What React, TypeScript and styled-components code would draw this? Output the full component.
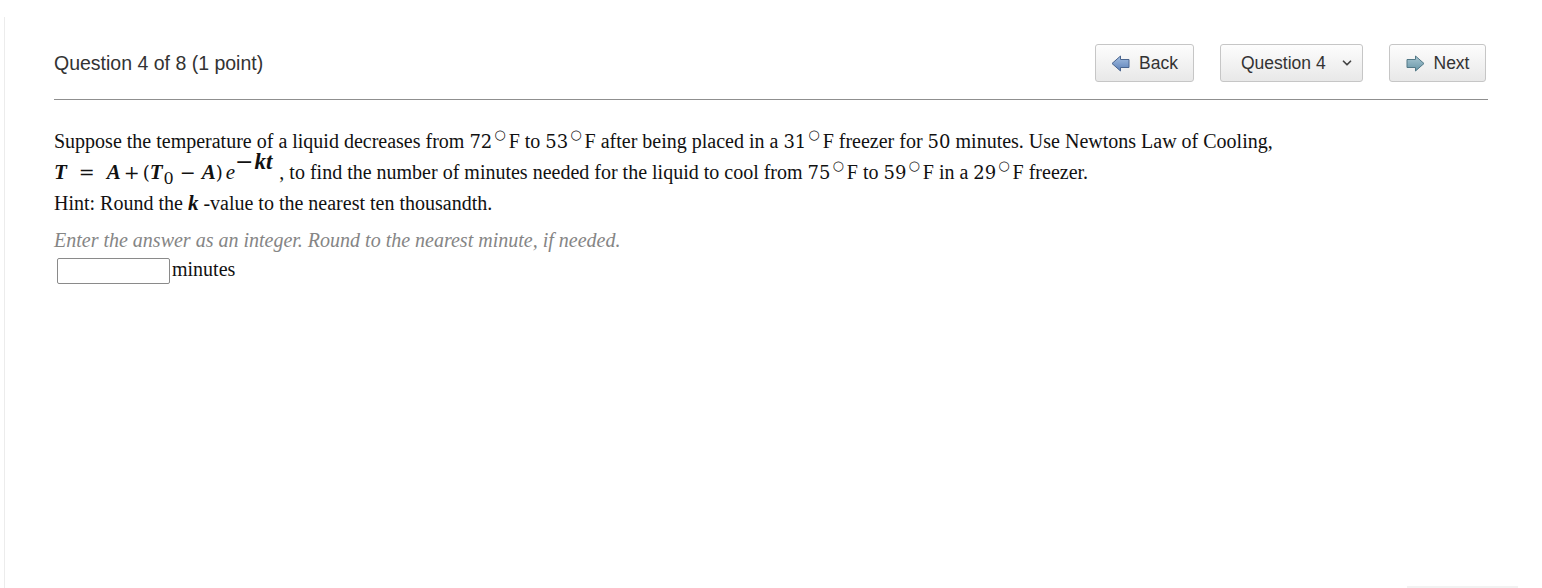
import React, { useState } from 'react';
import styled, { createGlobalStyle } from 'styled-components';
import { ChevronDown } from 'lucide-react';

const GlobalStyle = createGlobalStyle`
  html, body {
    margin: 0;
    padding: 0;
    background: #fff;
  }
  body {
    font-family: "Liberation Sans", Arial, sans-serif;
    color: #333;
  }
`;

const Page = styled.div`
  margin: 17px 0 0 4px;
  min-height: calc(100vh - 17px);
  border-left: 1px solid #ececec;
  box-sizing: border-box;
  padding: 0 54px 0 49px;
`;

const Header = styled.div`
  display: flex;
  align-items: center;
  justify-content: space-between;
  padding: 27px 2px 17px 0;
  border-bottom: 1px solid #8f8f8f;
`;

const Title = styled.h1`
  margin: 0;
  font-family: "Liberation Sans", Arial, sans-serif;
  font-weight: normal;
  font-size: 19.5px;
  color: #333;
`;

const Nav = styled.div`
  display: flex;
  align-items: center;
  gap: 26px;
`;

const NavButton = styled.button<{ $w: number }>`
  display: flex;
  align-items: center;
  justify-content: center;
  gap: 9px;
  width: ${(p) => p.$w}px;
  height: 38px;
  box-sizing: border-box;
  padding: 0 12px;
  border: 1px solid #c6c6c6;
  border-radius: 3px;
  background: linear-gradient(#fdfdfd, #e8e8e8);
  font-family: "Liberation Sans", Arial, sans-serif;
  font-size: 17.5px;
  color: #333;
  cursor: pointer;
`;

const Picker = styled.div`
  display: flex;
  align-items: center;
  justify-content: space-between;
  width: 143px;
  height: 38px;
  box-sizing: border-box;
  padding: 0 8px 0 20px;
  border: 1px solid #c6c6c6;
  border-radius: 3px;
  background: linear-gradient(#fdfdfd, #e8e8e8);
  font-size: 17.5px;
  color: #333;
`;

const Body = styled.div`
  padding-top: 26px;
  font-family: "Liberation Serif", "Times New Roman", serif;
  font-size: 20px;
  color: #111;
`;

const Line = styled.div`
  line-height: 31px;
  white-space: nowrap;
`;

const Num = styled.span`
  font-family: "DejaVu Serif", "Liberation Serif", serif;
  font-size: 18px;
`;

const Var = styled.span<{ $plain?: boolean }>`
  font-family: "Liberation Serif", serif;
  font-style: italic;
  font-weight: ${(p) => (p.$plain ? 'normal' : 'bold')};
  font-size: 21px;
`;

const Op = styled.span<{ $space?: number; $size?: number }>`
  font-family: "DejaVu Serif", serif;
  font-size: ${(p) => p.$size ?? 19}px;
  margin: 0 ${(p) => p.$space ?? 5}px;
`;

const Deg = styled.sup`
  font-family: "DejaVu Sans", sans-serif;
  font-size: 13px;
  vertical-align: 9px;
  line-height: 0;
  margin: 0 3px 0 2px;
`;

const Exp = styled.sup`
  vertical-align: 10px;
  line-height: 0;
  margin: 0 7px 0 0;
`;

const ExpVar = styled.span`
  font-family: "Liberation Serif", serif;
  font-style: italic;
  font-weight: bold;
  font-size: 23px;
  margin-left: 1px;
`;

const Sub = styled.sub`
  font-family: "DejaVu Serif", serif;
  font-size: 16px;
  vertical-align: -5px;
  line-height: 0;
  margin-left: 1px;
`;

const Instruction = styled.div`
  margin-top: 6px;
  font-style: italic;
  color: #858585;
  line-height: 30px;
`;

const AnswerRow = styled.div`
  display: flex;
  align-items: center;
  margin: 3px 0 0 3px;
`;

const AnswerInput = styled.input`
  width: 113px;
  height: 26px;
  box-sizing: border-box;
  border: 1px solid #8a8a8a;
  border-radius: 2px;
  padding: 2px 4px;
  font-family: "Liberation Serif", serif;
  font-size: 16px;
  outline: none;
`;

const Unit = styled.span`
  margin-left: 2px;
  margin-top: -3px;
`;

const Corner = styled.div`
  position: fixed;
  right: 24px;
  bottom: 0;
  width: 111px;
  height: 2px;
  background: #f2f2f2;
`;

const BackArrow = () => (
  <svg width="19" height="17" viewBox="0 0 19 17">
    <defs>
      <linearGradient id="bk" x1="0" y1="0" x2="0" y2="1">
        <stop offset="0" stopColor="#a6c0e2" />
        <stop offset="1" stopColor="#5b80b8" />
      </linearGradient>
    </defs>
    <path d="M1 8.5 L9.5 1 L9.5 4.5 L18 4.5 L18 12.5 L9.5 12.5 L9.5 16 Z" fill="url(#bk)" stroke="#4a658f" strokeWidth="1" strokeLinejoin="round" />
  </svg>
);

const NextArrow = () => (
  <svg width="19" height="17" viewBox="0 0 19 17">
    <defs>
      <linearGradient id="nx" x1="0" y1="0" x2="0" y2="1">
        <stop offset="0" stopColor="#aac8d3" />
        <stop offset="1" stopColor="#6795a7" />
      </linearGradient>
    </defs>
    <path d="M18 8.5 L9.5 1 L9.5 4.5 L1 4.5 L1 12.5 L9.5 12.5 L9.5 16 Z" fill="url(#nx)" stroke="#527886" strokeWidth="1" strokeLinejoin="round" />
  </svg>
);

const App = () => {
  const [answer, setAnswer] = useState('');

  return (
    <>
      <GlobalStyle />
      <Page>
        <Header>
          <Title>Question 4 of 8 (1 point)</Title>
          <Nav>
            <NavButton $w={99}>
              <BackArrow />
              Back
            </NavButton>
            <Picker>
              <span>Question 4</span>
              <ChevronDown size={14} strokeWidth={3} color="#444" />
            </Picker>
            <NavButton $w={97}>
              <NextArrow />
              Next
            </NavButton>
          </Nav>
        </Header>

        <Body>
          <Line>
            Suppose the temperature of a liquid decreases from <Num>72</Num>
            <Deg>○</Deg>F to <Num>53</Num>
            <Deg>○</Deg>F after being placed in a <Num>31</Num>
            <Deg>○</Deg>F freezer for <Num>50</Num> minutes. Use Newtons Law of Cooling,
          </Line>
          <Line>
            <Var>T</Var>
            <Op $space={12}>=</Op>
            <Var>A</Var>
            <Op $space={3}>+</Op>
            <Num>(</Num>
            <Var>T</Var>
            <Sub>0</Sub>
            <Op $space={6}>−</Op>
            <Var>A</Var>
            <Num>)</Num>
            <Var $plain style={{ marginLeft: 3 }}>e</Var>
            <Exp>
              <Op $space={0} $size={22}>−</Op>
              <ExpVar>kt</ExpVar>
            </Exp>
            , to find the number of minutes needed for the liquid to cool from <Num>75</Num>
            <Deg>○</Deg>F to <Num>59</Num>
            <Deg>○</Deg>F in a <Num>29</Num>
            <Deg>○</Deg>F freezer.
          </Line>
          <Line>
            Hint: Round the <Var>k</Var> -value to the nearest ten thousandth.
          </Line>

          <Instruction>Enter the answer as an integer. Round to the nearest minute, if needed.</Instruction>
          <AnswerRow>
            <AnswerInput value={answer} onChange={(e) => setAnswer(e.target.value)} />
            <Unit>minutes</Unit>
          </AnswerRow>
        </Body>
      </Page>
      <Corner />
    </>
  );
};

export default App;
